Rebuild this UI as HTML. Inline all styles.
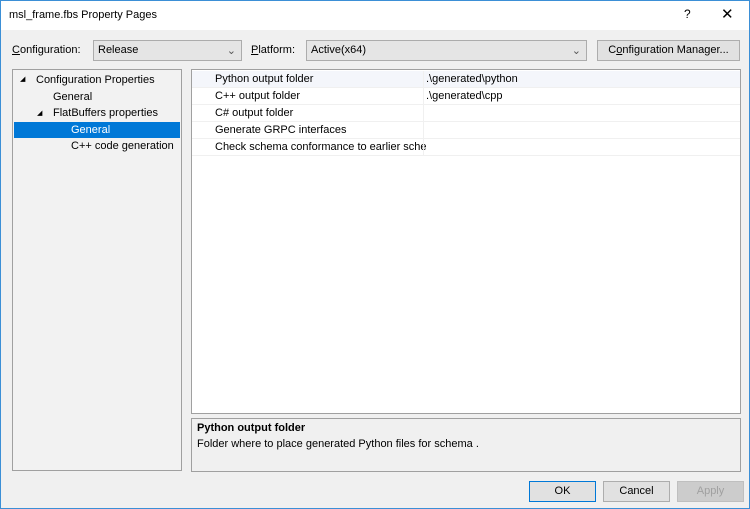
<!DOCTYPE html><html><head><style>
*{box-sizing:border-box;margin:0;padding:0}
body{width:750px;height:509px;overflow:hidden;font-family:"Liberation Sans",sans-serif;font-size:11px;color:#000;background:#fff}
.win{position:absolute;left:0;top:0;width:750px;height:509px;border:1px solid #3b8fd6;background:#f0f0f0}
.title{position:absolute;left:0;top:0;width:748px;height:29px;background:#fff}
.abs{position:absolute}
.combo{position:absolute;height:21px;border:1px solid #acacac;background:#e5e5e5;padding:3px 4px}
.btn{position:absolute;height:21px;border:1px solid #adadad;background:#e1e1e1;text-align:center;padding-top:3px}
.row{position:absolute;left:0;height:17px;width:548px;border-bottom:1px solid #f0f0f0}
.row span{position:absolute;top:2px}
</style></head><body><div class="win">
<div class="title"><div class="abs" style="left:8px;top:8px;font-size:11px">msl_frame.fbs Property Pages</div>
<div class="abs" style="left:683px;top:6px;font-size:12px">?</div>
<div class="abs" style="left:720px;top:4px;font-size:15px">✕</div></div>
<div class="abs" style="left:11px;top:43px"><u>C</u>onfiguration:</div>
<div class="combo" style="left:92px;top:39px;width:149px">Release<span class="abs" style="right:5px;top:3px;color:#555">⌄</span></div>
<div class="abs" style="left:250px;top:43px"><u>P</u>latform:</div>
<div class="combo" style="left:305px;top:39px;width:281px">Active(x64)<span class="abs" style="right:5px;top:3px;color:#555">⌄</span></div>
<div class="btn" style="left:596px;top:39px;width:143px">C<u>o</u>nfiguration Manager...</div>
<div class="abs" style="left:11px;top:68px;width:170px;height:402px;border:1px solid #a0a0a0;background:#f2f2f2">
<div class="abs" style="left:7px;top:5px;font-size:7px">◢</div><div class="abs" style="left:23px;top:4px">Configuration Properties</div>
<div class="abs" style="left:40px;top:21px">General</div>
<div class="abs" style="left:24px;top:39px;font-size:7px">◢</div><div class="abs" style="left:40px;top:37px">FlatBuffers properties</div>
<div class="abs" style="left:1px;top:52px;width:166px;height:16px;background:#0078d7"></div>
<div class="abs" style="left:58px;top:54px;color:#fff">General</div>
<div class="abs" style="left:58px;top:70px">C++ code generation</div>
</div>
<div class="abs" style="left:190px;top:68px;width:550px;height:345px;border:1px solid #a0a0a0;background:#fff">
<div class="row" style="top:1px;background:#f4f6fb"><span style="left:23px">Python output folder</span><span style="left:234px">.\generated\python</span></div>
<div class="row" style="top:18px"><span style="left:23px">C++ output folder</span><span style="left:234px">.\generated\cpp</span></div>
<div class="row" style="top:35px"><span style="left:23px">C# output folder</span></div>
<div class="row" style="top:52px"><span style="left:23px">Generate GRPC interfaces</span></div>
<div class="row" style="top:69px"><span style="left:23px">Check schema conformance to earlier sche</span></div>
<div class="abs" style="left:231px;top:1px;width:1px;height:85px;background:#f0f0f0"></div>
</div>
<div class="abs" style="left:190px;top:417px;width:550px;height:54px;border:1px solid #a0a0a0;background:#f0f0f0">
<div class="abs" style="left:5px;top:3px;font-weight:bold">Python output folder</div>
<div class="abs" style="left:5px;top:19px">Folder where to place generated Python files for schema .</div></div>
<div class="btn" style="left:528px;top:480px;width:67px;border:1px solid #0078d7">OK</div>
<div class="btn" style="left:602px;top:480px;width:67px">Cancel</div>
<div class="btn" style="left:676px;top:480px;width:67px;color:#a0a0a0;background:#ccc;border-color:#bfbfbf">Apply</div>
</div></body></html>
